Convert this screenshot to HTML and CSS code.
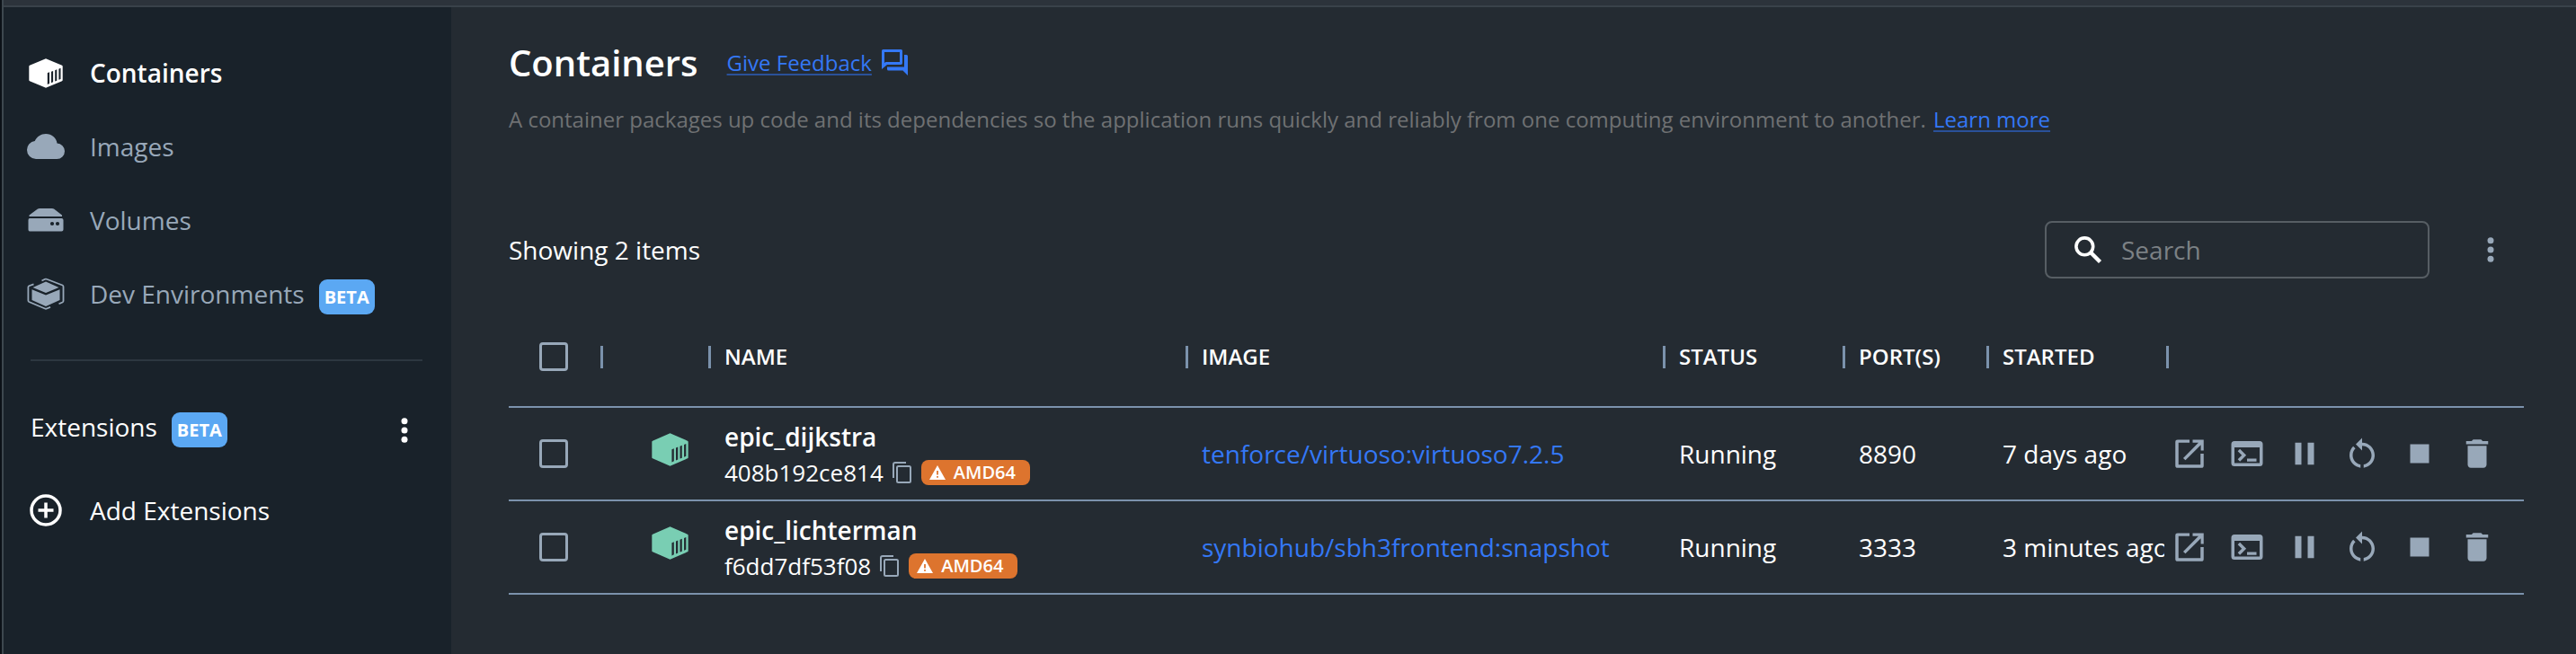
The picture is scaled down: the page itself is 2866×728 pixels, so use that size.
FILE: index.html
```html
<!DOCTYPE html>
<html lang="en">
<head>
<meta charset="utf-8">
<title>Containers</title>
<link rel="stylesheet" href="styles.css">
</head>
<body>
<svg width="0" height="0" class="sprite" aria-hidden="true">
  <symbol id="cube" viewBox="0 0 38 34" preserveAspectRatio="none">
    <path fill="currentColor" fill-rule="evenodd" d="M19 .3 37 8Q37.700 8.300 37.700 9V25Q37.700 25.700 37 26L19 33.700 1 26Q.3 25.700 .3 25V9Q.3 8.300 1 8ZM20.800 16.800V29.800L23 28.800V15.800ZM25 15.200V28L27.100 27.100V14.300ZM29.200 13.600V26.300L31.300 25.400V12.700ZM33.400 12V24.500L35.500 23.600V11.100Z"/>
  </symbol>
  <symbol id="dots" viewBox="0 0 8 28">
    <g fill="currentColor"><circle cx="4" cy="3.700" r="3.500"/><circle cx="4" cy="14" r="3.500"/><circle cx="4" cy="24.300" r="3.500"/></g>
  </symbol>
  <symbol id="copy" viewBox="0 0 21 24">
    <g fill="none" stroke="currentColor" stroke-width="2"><path d="M1 18V3Q1 1 3 1H15"/><rect x="5" y="5" width="15" height="18" rx="1.500"/></g>
  </symbol>
  <symbol id="warn" viewBox="0 0 18 16">
    <path fill="currentColor" fill-rule="evenodd" d="M9 0 18 16H0ZM8.100 6V10.500H9.900V6ZM8.100 12V13.800H9.900V12Z"/>
  </symbol>
  <symbol id="open" viewBox="0 0 24 24">
    <path fill="currentColor" d="M12 3.200V5H5V19H19V12H21V19.500Q21 21 19.500 21H4.500Q3 21 3 19.500V4.600Q3 3.200 4.500 3.200ZM14 3.200H21V10H19.200V6.400L9.400 16.200 8 14.800 17.700 5H14Z"/>
  </symbol>
  <symbol id="term" viewBox="0 0 24 24">
    <path fill="currentColor" fill-rule="evenodd" d="M4 4H20Q22 4 22 6V18Q22 20 20 20H4Q2 20 2 18V6Q2 4 4 4ZM4 8V18H20V8ZM7.500 17 6.100 15.600 8.700 13 6.100 10.400 7.500 9 11.500 13ZM12 15.200H18V17H12Z"/>
  </symbol>
  <symbol id="pause" viewBox="0 0 24 24"><path fill="currentColor" d="M6 19h4V5H6v14zm8-14v14h4V5h-4z"/></symbol>
  <symbol id="restart" viewBox="0 0 24 24"><path fill="currentColor" d="M12 5V2L8 6l4 4V7c3.310 0 6 2.690 6 6 0 2.970-2.170 5.430-5 5.910v2.020c3.950-.49 7-3.850 7-7.930 0-4.420-3.580-8-8-8zm-6 8c0-1.650.67-3.150 1.760-4.240L6.340 7.340C4.900 8.790 4 10.790 4 13c0 4.080 3.050 7.440 7 7.930v-2.020c-2.830-.48-5-2.940-5-5.910z"/></symbol>
  <symbol id="stop" viewBox="0 0 24 24"><path fill="currentColor" d="M6 6h12v12H6z"/></symbol>
  <symbol id="trash" viewBox="0 0 24 24"><path fill="currentColor" d="M6 19c0 1.100.9 2 2 2h8c1.100 0 2-.9 2-2V7H6v12zM19 4h-3.500l-1-1h-5l-1 1H5v2h14V4z"/></symbol>
</svg>

<div class="window">
  <div class="titlebar"></div>
  <div class="body">
    <nav class="sidebar">
      <a class="nav-item active"><span class="nav-icon"><svg width="38" height="33"><use href="#cube"/></svg></span><span>Containers</span></a>
      <a class="nav-item"><span class="nav-icon"><svg width="42" height="28" viewBox="0 0 42 28"><path fill="currentColor" d="M10 28A10 10 0 0 1 0 18 10 10 0 0 1 8.700 8C11 3 15.500 0 21 0 27.500 0 32.800 4.500 33.500 10.500A8.900 8.900 0 0 1 42 19.300 8.700 8.700 0 0 1 33.300 28Z"/></svg></span><span>Images</span></a>
      <a class="nav-item"><span class="nav-icon"><svg width="40" height="26" viewBox="0 0 40 26"><path fill="currentColor" fill-rule="evenodd" d="M11 .5Q12 0 13 0H27Q28 0 29 .5L38 7.500V9H1.500V7.500ZM2 11H37.500Q39.500 11 39.500 13V23.500Q39.500 25.500 37.500 25.500H2Q.5 25.500 .5 23.500V13Q.5 11 2 11Z"/><circle cx="27" cy="17" r="2.100" class="hole"/><circle cx="33" cy="17" r="2.100" class="hole"/></svg></span><span>Volumes</span></a>
      <a class="nav-item"><span class="nav-icon"><svg width="42" height="36" viewBox="0 0 42 36"><g fill="currentColor"><path d="M21 4.500 35.500 11 21 17 6.500 11Z"/><path d="M5.500 13.200 21 19.600 36.500 13.200V25L21 32 5.500 25Z"/></g><g fill="none" stroke="currentColor" stroke-width="1.800"><path d="M16.500 3.500 20 1.800Q21 1.300 22 1.800L39.500 8.500Q40.500 9 40.500 10V26Q40.500 27 39.500 27.500L35.500 29.300M7.500 7.300 2.300 9.200Q1.400 9.700 1.400 10.700V25.500Q1.400 26.500 2.300 27L20 34.500Q21 35 22 34.500L26 32.800"/></g></svg></span><span>Dev Environments</span><span class="beta">BETA</span></a>
      <div class="divider"></div>
      <div class="ext-head"><span>Extensions</span><span class="beta">BETA</span><svg class="ext-more" width="8" height="28"><use href="#dots"/></svg></div>
      <a class="nav-item add"><span class="nav-icon"><svg width="36" height="36" viewBox="0 0 36 36" fill="none" stroke="currentColor"><circle cx="18" cy="18" r="16" stroke-width="3.500"/><path d="M18 9.500V26.500M9.500 18H26.500" stroke-width="3.500"/></svg></span><span>Add Extensions</span></a>
    </nav>

    <main class="main">
      <header class="head">
        <h1>Containers</h1>
        <a class="link feedback">Give Feedback</a>
        <svg class="chat" width="29" height="30" viewBox="0 0 29 30"><path fill="currentColor" fill-rule="evenodd" d="M1.500 0H21.500Q23 0 23 1.500V15Q23 17 21.500 17H6L0 22V1.500Q0 0 1.500 0ZM3 3V15L4.500 14H20V3ZM25 6H27.500Q29 6 29 7.500V29L23.500 23.500H7.500Q6 23.500 6 22V19.500H25Z"/></svg>
      </header>
      <p class="desc">A container packages up code and its dependencies so the application runs quickly and reliably from one computing environment to another. <a class="link learn">Learn more</a></p>

      <div class="toolbar">
        <span class="count">Showing 2 items</span>
        <div class="search"><svg width="31" height="31" viewBox="0 0 31 31" fill="none" stroke="currentColor"><circle cx="11.300" cy="11.300" r="9.400" stroke-width="3.600"/><path d="M18.500 18.500 28.500 28.500" stroke-width="4.400"/></svg><span>Search</span></div>
        <svg class="more" width="8" height="28"><use href="#dots"/></svg>
      </div>

      <section class="table">
        <div class="row header">
          <span class="pick"><i class="check"></i></span>
          <span class="th"></span>
          <span class="th">NAME</span>
          <span class="th">IMAGE</span>
          <span class="th">STATUS</span>
          <span class="th">PORT(S)</span>
          <span class="th">STARTED</span>
          <span class="th"></span>
        </div>
        <div class="row">
          <span class="pick"><i class="check"></i></span>
          <span class="state"><svg width="41" height="37"><use href="#cube"/></svg></span>
          <div class="name"><b>epic_dijkstra</b><div class="meta"><span class="cid">408b192ce814</span><svg class="copy" width="21" height="24"><use href="#copy"/></svg><span class="arch"><svg width="18" height="16"><use href="#warn"/></svg>AMD64</span></div></div>
          <span class="td image">tenforce/virtuoso:virtuoso7.2.5</span>
          <span class="td">Running</span>
          <span class="td">8890</span>
          <span class="td">7 days ago</span>
          <div class="actions"><svg><use href="#open"/></svg><svg><use href="#term"/></svg><svg><use href="#pause"/></svg><svg><use href="#restart"/></svg><svg><use href="#stop"/></svg><svg><use href="#trash"/></svg></div>
        </div>
        <div class="row">
          <span class="pick"><i class="check"></i></span>
          <span class="state"><svg width="41" height="37"><use href="#cube"/></svg></span>
          <div class="name"><b>epic_lichterman</b><div class="meta"><span class="cid">f6dd7df53f08</span><svg class="copy" width="21" height="24"><use href="#copy"/></svg><span class="arch"><svg width="18" height="16"><use href="#warn"/></svg>AMD64</span></div></div>
          <span class="td image">synbiohub/sbh3frontend:snapshot</span>
          <span class="td">Running</span>
          <span class="td">3333</span>
          <span class="td">3 minutes ago</span>
          <div class="actions"><svg><use href="#open"/></svg><svg><use href="#term"/></svg><svg><use href="#pause"/></svg><svg><use href="#restart"/></svg><svg><use href="#stop"/></svg><svg><use href="#trash"/></svg></div>
        </div>
      </section>
    </main>
  </div>
</div>
</body>
</html>
```
FILE: styles.css
```css
* { box-sizing: border-box; }
body {
  margin: 0;
  background: #0b1117;
  font-family: "Open Sans", "Noto Sans", sans-serif;
  font-size: 28px;
  line-height: 38px;
  color: #fff;
}
.sprite { position: absolute; }
svg { display: block; flex: none; }
.window { height: 728px; display: flex; flex-direction: column; margin-left: 2px; border-left: 2px solid #3d474e; overflow: hidden; }
.titlebar { height: 8px; flex: none; background: #2c333b; border-bottom: 2px solid #39424a; }
.body { flex: 1; display: flex; }

.sidebar { width: 498px; flex: none; background: #19222a; padding-top: 32px; }
.nav-item { display: flex; align-items: center; height: 82px; padding-left: 26px; color: #98a8b9; }
.nav-icon { width: 42px; margin-right: 28px; display: flex; justify-content: center; }
.nav-item.active { color: #fff; font-weight: 600; }
.hole { fill: #19222a; }
.beta { margin: 7px 0 0 16px; width: 62px; height: 39px; border-radius: 9px; background: #5ba8f3; color: #fff; font-size: 20px; font-weight: 700; line-height: 40px; text-align: center; }
.divider { height: 2px; margin: 32px 32px 0 30px; background: #2d3740; }
.ext-head { display: flex; align-items: center; height: 78px; margin-top: 34px; padding: 0 48px 0 30px; }
.ext-more { margin: 8px 0 0 auto; }
.nav-item.add { color: #fff; margin-top: 13px; }

.main { flex: 1; background: #242b32; padding: 35px 58px 0 62px; }
.head { display: flex; align-items: center; height: 54px; }
.head, .desc, .toolbar { padding-left: 2px; }
h1 { margin: 0; font-size: 40px; line-height: 54px; font-weight: 600; }
.link { color: #3478f6; text-decoration: underline; text-decoration-color: #2a5199; text-decoration-thickness: 2px; text-underline-offset: 3px; }
.feedback { margin-left: 32px; font-size: 24px; line-height: 32px; }
.chat { margin-left: 11px; color: #3478f6; }
.desc { margin: 20px 0 0; font-size: 24px; line-height: 32px; color: #6f7173; }
.learn { margin-left: 2px; }

.toolbar { display: flex; align-items: center; margin-top: 97px; height: 64px; }
.search { margin-left: auto; display: flex; align-items: center; gap: 21px; width: 428px; height: 64px; padding-left: 31px; border: 2px solid #575e64; border-radius: 8px; }
.search span { color: #7c8185; }
.more { margin: 0 33px 0 64px; color: #98a8b9; }

.table { margin-top: 32px; padding-left: 2px; }
.row { display: grid; grid-template-columns: 104px 120px 531px 531px 200px 160px 200px 396px; height: 104px; border-bottom: 2px solid #7b92ac; align-items: center; }
.row.header { height: 112px; }
.pick { padding-left: 34px; }
.check { display: block; width: 32px; height: 32px; border: 3px solid #98a8b9; border-radius: 4px; }
.th { height: 25px; border-left: 3px solid #7b92ac; margin-left: -2px; padding-left: 15px; font-size: 24px; line-height: 23px; font-weight: 600; }
.td { padding-left: 16px; overflow: hidden; white-space: nowrap; }
.td:nth-child(7) { margin-right: 4px; }
.image { color: #3478f6; }
.state { padding-left: 55px; color: #79ceb3; margin-top: -9px; }
.name { padding-left: 16px; margin-top: 2px; }
.name b { display: block; font-weight: 600; }
.meta { display: flex; align-items: center; height: 38px; margin-top: 2px; }
.cid { font-size: 26px; }
.copy { margin-left: 10px; color: #98a8b9; }
.arch { display: flex; align-items: center; gap: 9px; height: 28px; width: 121px; margin-left: 11px; padding-left: 9px; border-radius: 8px; background: #dd742e; font-size: 20px; line-height: 28px; font-weight: 600; }
.actions { display: flex; gap: 22px; margin-left: 3px; color: #98a8b9; }
.actions svg { width: 42px; height: 42px; }
```
